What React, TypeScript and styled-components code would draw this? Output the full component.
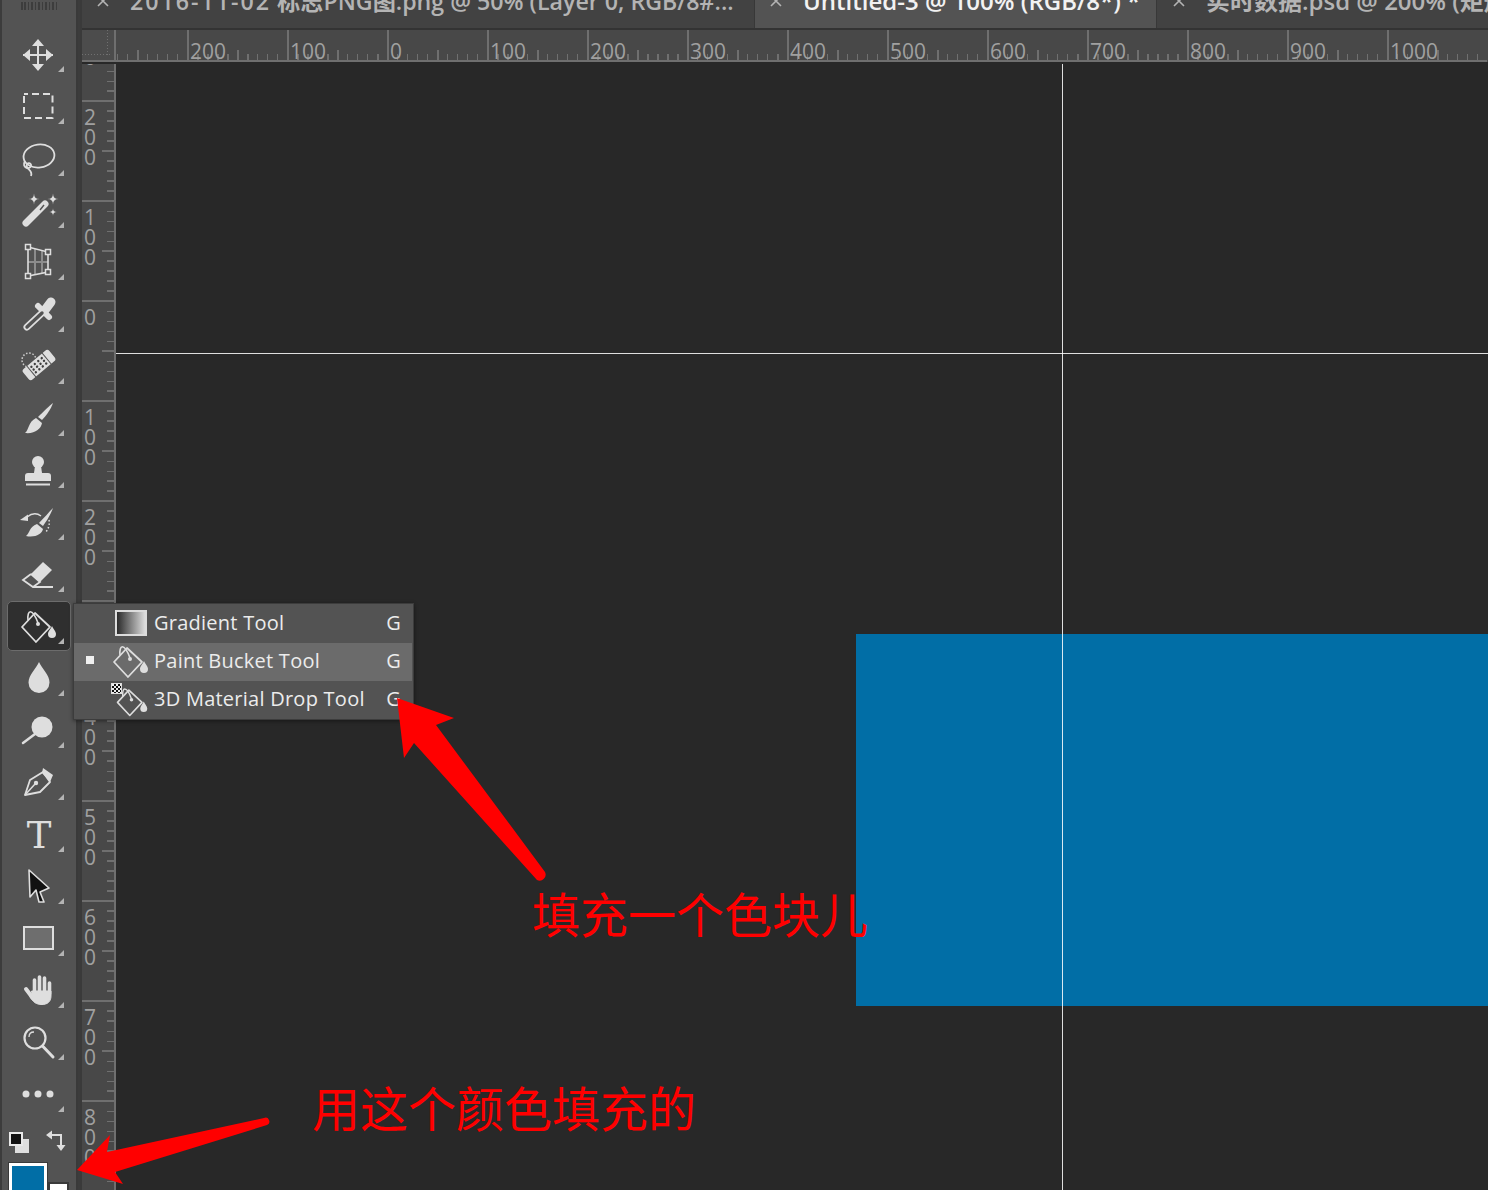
import React from "react";
import styled, { createGlobalStyle } from "styled-components";

const Global = createGlobalStyle`
  html, body { margin: 0; padding: 0; background: #282828; overflow: hidden; }
  #root { width: 1488px; height: 1190px; }
  * { box-sizing: border-box; }
`;

const Shell = styled.div`
  position: relative;
  display: flex;
  width: 1488px;
  height: 1190px;
  overflow: hidden;
  background: #3c3c3c;
  padding-left: 2px;
  font-family: "Open Sans", "Noto Sans CJK SC", sans-serif;
`;

const Toolbar = styled.aside`
  flex: none;
  width: 74px;
  height: 100%;
  background: #535353;
  padding: 2px 4px 0;
  display: flex;
  flex-direction: column;
`;

const Grip = styled.div`
  flex: none;
  width: 38px;
  height: 8px;
  margin: 0 0 18px 15px;
  background: repeating-linear-gradient(90deg, #3d3d3d 0 1.5px, transparent 1.5px 3.45px);
`;

const ToolButton = styled.div<{ $active?: boolean }>`
  position: relative;
  flex: none;
  height: 52px;
  display: flex;
  align-items: center;
  justify-content: center;
  ${(p) =>
    p.$active
      ? `&::before {
          content: "";
          position: absolute;
          inset: 1px;
          background: #2f2f2f;
          border: 1px solid #6c6c6c;
          border-radius: 5px;
        }`
      : ""}
`;

const IconSvg = styled.svg`
  position: relative;
  flex: none;
  width: 40px;
  height: 40px;
  margin-right: 2px;
  color: #dedede;
  overflow: visible;
`;

const Corner = styled.span`
  position: absolute;
  right: 8px;
  bottom: 8px;
  width: 6px;
  height: 6px;
  background: #b4b4b4;
  clip-path: polygon(100% 0, 100% 100%, 0 100%);
`;

const ColorArea = styled.div`
  position: relative;
  flex: none;
  height: 70px;
`;

const DefaultBack = styled.span`
  position: absolute;
  left: 9px;
  top: 19px;
  width: 14px;
  height: 14px;
  background: #dedede;
`;

const DefaultFront = styled.span`
  position: absolute;
  left: 3px;
  top: 12px;
  width: 14px;
  height: 14px;
  background: #111;
  border: 2px solid #e8e8e8;
`;

const SwapSvg = styled.svg`
  position: absolute;
  left: 39px;
  top: 10px;
  width: 21px;
  height: 21px;
`;

const BackSwatch = styled.span`
  position: absolute;
  left: 42px;
  top: 62px;
  width: 21px;
  height: 28px;
  background: #fff;
  border: 2px solid #3a3a3a;
`;

const ForeSwatch = styled.span`
  position: absolute;
  left: 3px;
  top: 43px;
  width: 38px;
  height: 50px;
  background: #016ea6;
  border: 3px solid #fff;
  outline: 1px solid #3a3a3a;
`;

const Divider = styled.div`
  flex: none;
  width: 6px;
  height: 100%;
  background: #3c3c3c;
  border-left: 2px solid #3a3a3a;
  border-right: 2px solid #3a3a3a;
`;

const Main = styled.main`
  flex: 1;
  min-width: 0;
  display: flex;
  flex-direction: column;
`;

const TabBar = styled.div`
  flex: none;
  height: 30px;
  display: flex;
  background: #424242;
  border-bottom: 2px solid #333;
  overflow: hidden;
`;

const Tab = styled.div<{ $active?: boolean; $width?: number; $pad: number }>`
  flex: ${(p) => (p.$width ? `0 0 ${p.$width}px` : "1")};
  min-width: 0;
  height: 28px;
  display: flex;
  padding-left: ${(p) => p.$pad}px;
  background: ${(p) => (p.$active ? "#535353" : "#424242")};
  border-right: ${(p) => (p.$active ? "1px solid #383838" : "none")};
  border-left: ${(p) => (p.$active ? "1px solid #383838" : "none")};
  color: ${(p) => (p.$active ? "#f2f2f2" : "#b4b4b4")};
  font-size: 24px;
  font-weight: 600;
  line-height: 24px;
  white-space: nowrap;
`;

const TabClose = styled.svg`
  flex: none;
  width: 14px;
  height: 14px;
  margin-top: -6px;
  margin-right: 20px;
  color: #b4b4b4;
`;

const TabLabel = styled.span<{ $size?: number }>`
  margin-top: -11px;
  height: 24px;
  font-size: ${(p) => p.$size ?? 24}px;
`;

const DateRun = styled.span`
  letter-spacing: 2px;
`;

const RulerRow = styled.div`
  flex: none;
  height: 34px;
  display: flex;
  background: #484848;
  border-bottom: 2px solid #282828;
`;

const RulerCorner = styled.div`
  flex: none;
  width: 34px;
  height: 32px;
  border-right: 2px solid #6f6f6f;
  border-bottom: 2px solid #6f6f6f;
  background:
    repeating-linear-gradient(90deg, #707070 0 1px, transparent 1px 3px) left 24px / 29px 1px no-repeat,
    repeating-linear-gradient(180deg, #707070 0 1px, transparent 1px 3px) 25px top / 1px 27px no-repeat,
    #4c4c4c;
`;

const HCell = styled.div<{ $w: number; $mark?: boolean }>`
  flex: none;
  width: ${(p) => p.$w}px;
  height: 32px;
  padding-left: 1px;
  border-left: ${(p) => (p.$mark ? "2px solid #6f6f6f" : "none")};
  color: #a0a0a0;
  font-size: 21px;
  line-height: 42px;
  border-bottom: 2px solid #6f6f6f;
  overflow: hidden;
  background:
    linear-gradient(#6f6f6f, #6f6f6f) ${(p) => (p.$mark ? "48px" : `${p.$w - 50}px`)} bottom / 2px 10px no-repeat,
    repeating-linear-gradient(90deg, #6f6f6f 0 1.5px, transparent 1.5px 10px) ${(p) => (p.$mark ? "8px" : `${p.$w % 10}px`)} bottom / 100% 6px no-repeat;
`;

const Body = styled.div`
  flex: 1;
  min-height: 0;
  display: flex;
`;

const VRuler = styled.div`
  flex: none;
  width: 34px;
  overflow: hidden;
  background: #484848;
  border-right: 2px solid #6f6f6f;
`;

const VCell = styled.div<{ $first?: boolean }>`
  height: 100px;
  margin-top: ${(p) => (p.$first ? "-64px" : "0")};
  padding: 5px 0 0 0;
  border-top: 2px solid #6f6f6f;
  background:
    linear-gradient(#6f6f6f, #6f6f6f) right 48px / 12px 2px no-repeat,
    repeating-linear-gradient(180deg, transparent 0 8.5px, #6f6f6f 8.5px 10px) right top / 7px 100% no-repeat;
`;

const VDigit = styled.div`
  width: 16px;
  text-align: center;
  height: 20px;
  line-height: 20px;
  font-size: 21px;
  color: #a0a0a0;
`;

const Canvas = styled.div`
  position: relative;
  flex: 1;
  background: #282828;
`;

const FilledBlock = styled.div`
  position: absolute;
  left: 740px;
  top: 570px;
  width: 632px;
  height: 372px;
  background: #016ea6;
`;

const GuideV = styled.div`
  position: absolute;
  left: 946px;
  top: 0;
  bottom: 0;
  width: 1px;
  background: rgba(255, 255, 255, 0.85);
`;

const GuideH = styled.div`
  position: absolute;
  left: 0;
  right: 0;
  top: 289px;
  height: 1px;
  background: rgba(255, 255, 255, 0.85);
`;

const Menu = styled.div`
  position: absolute;
  left: 73px;
  top: 603px;
  width: 341px;
  height: 117px;
  padding: 1px 1px 1px 0;
  background: #535353;
  border: 1px solid #3c3c3c;
  box-shadow: 0 1px 4px rgba(0, 0, 0, 0.45);
`;

const MenuRow = styled.div<{ $selected?: boolean }>`
  position: relative;
  display: flex;
  align-items: center;
  height: 38px;
  padding: 0 11px 4px 80px;
  background: ${(p) => (p.$selected ? "#6b6b6b" : "transparent")};
  color: #ececec;
  font-size: 20px;
  letter-spacing: 0.25px;
`;

const MenuLabel = styled.span`
  flex: 1;
`;

const GradientIcon = styled.span`
  position: absolute;
  left: 41px;
  top: 5px;
  width: 32px;
  height: 26px;
  border: 2px solid #dcdcdc;
  background: linear-gradient(90deg, #2b2b2b, #dcdcdc);
`;

const MenuIcon = styled.svg`
  position: absolute;
  left: 36px;
  top: -2px;
  width: 40px;
  height: 40px;
  color: #dedede;
`;

const SmallMenuIcon = styled(MenuIcon)`
  left: 40px;
  top: 3px;
  width: 35px;
  height: 35px;
`;

const Checker = styled.span`
  position: absolute;
  left: 37px;
  top: 2px;
  width: 11px;
  height: 11px;
  border: 1px solid #ddd;
  background: repeating-conic-gradient(#111 0 25%, #eee 0 50%) 0 0 / 4px 4px;
`;

const Bullet = styled.span`
  position: absolute;
  left: 12px;
  top: 13px;
  width: 8px;
  height: 8px;
  background: #f0f0f0;
`;

const ArrowLayer = styled.svg`
  position: absolute;
  inset: 0;
  width: 1488px;
  height: 1190px;
  pointer-events: none;
`;

const Note = styled.div<{ $x: number; $y: number }>`
  position: absolute;
  left: ${(p) => p.$x}px;
  top: ${(p) => p.$y}px;
  color: #ff0000;
  font-family: "Noto Sans CJK SC", sans-serif;
  font-weight: 400;
  font-size: 48px;
  line-height: 50px;
  white-space: nowrap;
`;

const star = (x: number, y: number, s: number) =>
  `M${x} ${y - s}Q${x} ${y} ${x + s} ${y}Q${x} ${y} ${x} ${y + s}Q${x} ${y} ${x - s} ${y}Q${x} ${y} ${x} ${y - s}Z`;

const Bucket = () => (
  <>
    <path d="M4 21L17 7L32 21L18 36Z" fill="none" stroke="currentColor" strokeWidth="1.8" strokeLinejoin="round" />
    <path d="M10 14C9 4 14 1 20 17" fill="none" stroke="currentColor" strokeWidth="1.6" />
    <circle cx="20" cy="18" r="2" fill="currentColor" />
    <path d="M34 20C35 23 38 25 38 28A4 4 0 0 1 30 28C30 25 33 23 34 20Z" fill="currentColor" />
  </>
);

const icons: React.ReactNode[] = [
  <g key="move" fill="currentColor">
    <path d="M20 6V36M5 21H35" stroke="currentColor" strokeWidth="2" />
    <path d="M20 5L26 12H14ZM20 37L26 30H14ZM5 21L12 15V27ZM35 21L28 15V27Z" />
  </g>,
  <rect key="marq" x="6" y="8" width="28.5" height="24" fill="none" stroke="currentColor" strokeWidth="2" strokeDasharray="7 4" strokeDashoffset="3" />,
  <g key="lasso" fill="none" stroke="currentColor" strokeWidth="1.8">
    <ellipse cx="21" cy="18" rx="15.5" ry="11.5" transform="rotate(-8 21 18)" />
    <path d="M7 23C3 30 12 32 13 28C14 24 7 24 9 29C10 32 15 33 13 38" />
  </g>,
  <g key="wand">
    <path d="M8 33L27 14" stroke="currentColor" strokeWidth="7" strokeLinecap="round" />
    <path d="M22 20L26 15" stroke="#535353" strokeWidth="1.4" />
    <path d={star(16, 9, 5.5) + star(35, 9, 5.5) + star(35, 22, 3.8)} fill="currentColor" />
  </g>,
  <g key="crop">
    <path d="M17 7V32M24 8V31M10 20H30" stroke="#8c8c8c" strokeWidth="2" />
    <path d="M10 5L30 10V30L10 34Z" fill="none" stroke="currentColor" strokeWidth="1.6" />
    {[[10, 5], [30, 10], [30, 30], [10, 34]].map(([x, y]) => (
      <rect key={x * 100 + y} x={x - 2.5} y={y - 2.5} width="5" height="5" fill="#535353" stroke="currentColor" strokeWidth="1.5" />
    ))}
  </g>,
  <g key="drop" strokeLinecap="round">
    <path d="M27 16L33 8" stroke="currentColor" strokeWidth="9" />
    <path d="M20 12L31 23" stroke="currentColor" strokeWidth="6" />
    <path d="M24 19L9 33" stroke="currentColor" strokeWidth="7" />
    <path d="M24 19L9 33" stroke="#535353" strokeWidth="3.4" />
  </g>,
  <g key="band">
    <circle cx="11" cy="14" r="7" fill="none" stroke="#cfcfcf" strokeWidth="1.5" strokeDasharray="1.5 1.8" />
    <g transform="rotate(-40 21 19)">
      <rect x="4" y="12" width="34" height="14" rx="3" fill="currentColor" />
      <path d="M11 11V27M31 11V27" stroke="#535353" strokeWidth="1" />
      {[14, 18.5, 23, 27.5].flatMap((x) =>
        [15.5, 19, 22.5].map((y) => <circle key={`${x}-${y}`} cx={x} cy={y} r="1.2" fill="#3f3f3f" />)
      )}
    </g>
  </g>,
  <g key="brush" fill="currentColor">
    <path d="M35 5C33 11 28 18 24 22L20 19C25 14 31 8 35 5Z" />
    <path d="M18 20L24 25C23 31 17 36 7 35C11 32 10 24 18 20Z" />
  </g>,
  <g key="stamp" fill="currentColor">
    <circle cx="20" cy="12" r="6" />
    <path d="M17 16H23L24 23H16Z" />
    <path d="M7 31V26Q7 23 10 23H30Q33 23 33 26V31Z" />
    <rect x="8" y="33.5" width="24" height="2" />
  </g>,
  <g key="hist" fill="currentColor">
    <path d="M35 6C33 12 28 20 25 24L21 21C26 16 31 10 35 6Z" />
    <path d="M19 22L25 27C24 32 17 36 8 34C12 31 11 25 19 22Z" />
    <path d="M2 18L10 12.5V19Z" />
    <path d="M9 15C14 11 19 11 23 14" fill="none" stroke="currentColor" strokeWidth="1.5" />
    <path d="M31 18C32 23 30 28 27 31" fill="none" stroke="currentColor" strokeWidth="1.5" strokeDasharray="1.5 2" />
  </g>,
  <g key="erase">
    <path d="M25 8L34 16L22 28L13 20Z" fill="currentColor" />
    <path d="M13 20L5 26L15 33H35" fill="none" stroke="currentColor" strokeWidth="1.8" />
    <path d="M13 20L22 28L15 33" fill="none" stroke="currentColor" strokeWidth="1.8" />
  </g>,
  <g key="bucket"><Bucket /></g>,
  <path key="blur" d="M21 4C24 11 31.5 17 31.5 24.5A10.5 10.5 0 0 1 10.5 24.5C10.5 17 18 11 21 4Z" fill="currentColor" />,
  <g key="dodge">
    <circle cx="24" cy="17" r="10.5" fill="currentColor" />
    <path d="M5 33L17 24" stroke="currentColor" strokeWidth="2.5" strokeLinecap="round" />
  </g>,
  <g key="pen">
    <path d="M7 33L12 18L25 10L32 20L22 30Z" fill="none" stroke="currentColor" strokeWidth="1.8" strokeLinejoin="round" />
    <path d="M25 6L35 13L32 20L24 11Z" fill="currentColor" />
    <path d="M7 33L17 22" stroke="currentColor" strokeWidth="1.5" />
    <circle cx="18" cy="21" r="2.2" fill="currentColor" />
  </g>,
  <text key="t" x="21" y="34" textAnchor="middle" fontFamily="'DejaVu Serif', serif" fontSize="37" fill="currentColor">T</text>,
  <path key="path" d="M11 4L31 22L22 26L26 36L21 36L18 24L12 31Z" fill="#111" stroke="currentColor" strokeWidth="1.6" strokeLinejoin="round" />,
  <rect key="rect" x="6" y="9" width="29" height="22" fill="#6e6e6e" stroke="currentColor" strokeWidth="2" />,
  <g key="hand" fill="currentColor" stroke="currentColor" strokeLinecap="round">
    <path d="M8 19L14 27" strokeWidth="4" fill="none" />
    <path d="M16.5 10V22M21.5 7V22M26.5 8V22M31.5 13V24" strokeWidth="3.6" fill="none" />
    <path d="M14 21H33V26C33 32 29 34.5 24 34.5C18 34.5 15 32 12 27Z" strokeWidth="1" />
  </g>,
  <g key="zoom" fill="none" stroke="currentColor">
    <circle cx="17" cy="16" r="10.5" strokeWidth="2.2" />
    <path d="M11 15C11 12 13 10 16 10" strokeWidth="1.3" />
    <path d="M24.5 24L35 35" strokeWidth="3" strokeLinecap="round" />
  </g>,
  <g key="more" fill="currentColor">
    <circle cx="8" cy="20" r="3.5" />
    <circle cx="20" cy="20" r="3.5" />
    <circle cx="32" cy="20" r="3.5" />
  </g>,
];

const hLabels = ["200", "100", "0", "100", "200", "300", "400", "500", "600", "700", "800", "900", "1000"];
const vLabels = ["300", "200", "100", "0", "100", "200", "300", "400", "500", "600", "700", "800"];

const CloseGlyph = () => (
  <TabClose viewBox="0 0 14 14">
    <path d="M2 2L12 12M12 2L2 12" stroke="currentColor" strokeWidth="1.6" />
  </TabClose>
);

export default function App() {
  return (
    <Shell>
      <Global />
      <Toolbar>
        <Grip />
        {icons.map((icon, i) => (
          <ToolButton key={i} $active={i === 11}>
            <IconSvg viewBox="0 0 40 40">{icon}</IconSvg>
            <Corner />
          </ToolButton>
        ))}
        <ColorArea>
          <DefaultBack />
          <DefaultFront />
          <SwapSvg viewBox="0 0 21 21">
            <path d="M6 5H16V16" fill="none" stroke="#dedede" strokeWidth="2" />
            <path d="M1 5L7 0.5V9.5ZM16 21L11.5 15H20.5Z" fill="#dedede" />
          </SwapSvg>
          <BackSwatch />
          <ForeSwatch />
        </ColorArea>
      </Toolbar>
      <Divider />
      <Main>
        <TabBar>
          <Tab $width={672} $pad={14}>
            <CloseGlyph />
            <TabLabel $size={23.2}><DateRun>2016-11-02</DateRun> 标志PNG图.png @ 50% (Layer 0, RGB/8#...</TabLabel>
          </Tab>
          <Tab $active $width={403} $pad={14}>
            <CloseGlyph />
            <TabLabel>Untitled-3 @ 100% (RGB/8*) *</TabLabel>
          </Tab>
          <Tab $pad={15}>
            <CloseGlyph />
            <TabLabel>实时数据.psd @ 200% (矩形 1, RGB/8#)</TabLabel>
          </Tab>
        </TabBar>
        <RulerRow>
          <RulerCorner />
          <HCell $w={71} />
          {hLabels.map((l, i) => (
            <HCell key={i} $w={100} $mark>{l}</HCell>
          ))}
        </RulerRow>
        <Body>
          <VRuler>
            {vLabels.map((l, i) => (
              <VCell key={i} $first={i === 0}>
                {l.split("").map((d, j) => (
                  <VDigit key={j}>{d}</VDigit>
                ))}
              </VCell>
            ))}
          </VRuler>
          <Canvas>
            <FilledBlock />
            <GuideV />
            <GuideH />
          </Canvas>
        </Body>
      </Main>
      <Menu>
        <MenuRow>
          <GradientIcon />
          <MenuLabel>Gradient Tool</MenuLabel>
          <span>G</span>
        </MenuRow>
        <MenuRow $selected>
          <Bullet />
          <MenuIcon viewBox="0 0 40 40"><Bucket /></MenuIcon>
          <MenuLabel>Paint Bucket Tool</MenuLabel>
          <span>G</span>
        </MenuRow>
        <MenuRow>
          <Checker />
          <SmallMenuIcon viewBox="0 0 40 40"><Bucket /></SmallMenuIcon>
          <MenuLabel>3D Material Drop Tool</MenuLabel>
          <span>G</span>
        </MenuRow>
      </Menu>
      <ArrowLayer viewBox="0 0 1488 1190">
        <path d="M397 698L454 718L436 725L545 872A6 6 0 0 1 537 880L414 743L404 758Z" fill="#ff0000" />
        <path d="M77 1170L110 1135L107 1152L264 1118A3.6 3.6 0 0 1 267 1125L115 1172L123 1184Z" fill="#ff0000" />
      </ArrowLayer>
      <Note $x={532} $y={887}>填充一个色块儿</Note>
      <Note $x={312} $y={1081}>用这个颜色填充的</Note>
    </Shell>
  );
}
